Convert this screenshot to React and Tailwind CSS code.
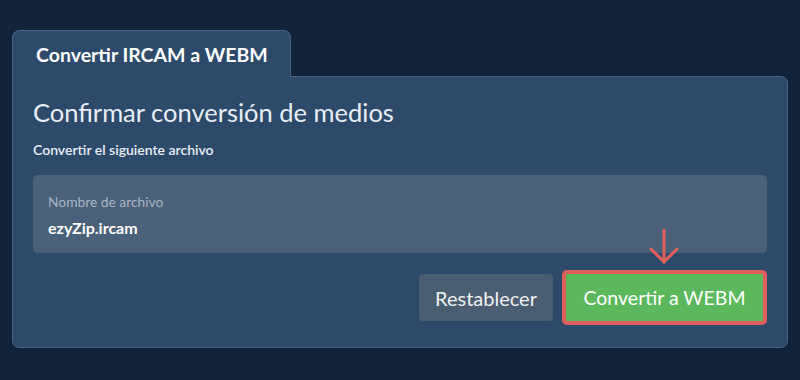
export default function App() {
  return (
    <div
      className="w-[800px] h-[380px] bg-[#12233a] pt-[30px] px-[12px]"
      style={{ fontFamily: "Lato, 'Open Sans', sans-serif" }}
    >
      <div className="flex items-end">
        <div className="w-[279px] h-[47px] bg-[#2e4a6a] border border-b-0 border-[#4b6486] rounded-t-[8px] pl-[23px] pt-[11px] text-[19.5px] leading-[26px] font-bold text-white relative z-10 -mb-px">
          Convertir IRCAM a WEBM
        </div>
      </div>
      <div className="w-[776px] bg-[#2e4a6a] border border-[#4b6486] rounded-b-[7px] rounded-tr-[7px] px-[20px] pt-[19px] pb-[22px]">
        <h1 className="text-[25.5px] leading-[32px] text-[#e9eef4]">
          Confirmar conversión de medios
        </h1>
        <p className="mt-[11px] text-[14px] font-semibold text-[#e9eef4]">
          Convertir el siguiente archivo
        </p>
        <div className="mt-[15px] h-[78px] rounded-[5px] bg-[#4b6079] px-[15px] pt-[18px]">
          <div className="text-[13.8px] text-[#a9b5c3] leading-[18px]">Nombre de archivo</div>
          <div className="mt-[7px] text-[16px] font-bold text-white leading-[20px]">ezyZip.ircam</div>
        </div>
        <div className="mt-[17px] flex justify-end items-center gap-[9px] relative">
          <button className="h-[47px] w-[134px] rounded-[4px] bg-[#4b5d70] text-[20px] text-[#eef1f4]">
            Restablecer
          </button>
          <div className="relative">
            <svg
              className="absolute left-[86px] -top-[42px]"
              width="32"
              height="38"
              viewBox="0 0 32 38"
              fill="none"
              stroke="#e0605a"
              strokeWidth="3"
              strokeLinecap="round"
              strokeLinejoin="round"
            >
              <path d="M16 2 V34" />
              <path d="M3 21 L16 34 L29 21" />
            </svg>
            <button className="h-[55px] w-[205px] rounded-[5px] bg-[#5cb85c] border-[4px] border-[#de5f5b] text-[19.5px] text-white">
              Convertir a WEBM
            </button>
          </div>
        </div>
      </div>
    </div>
  );
}
